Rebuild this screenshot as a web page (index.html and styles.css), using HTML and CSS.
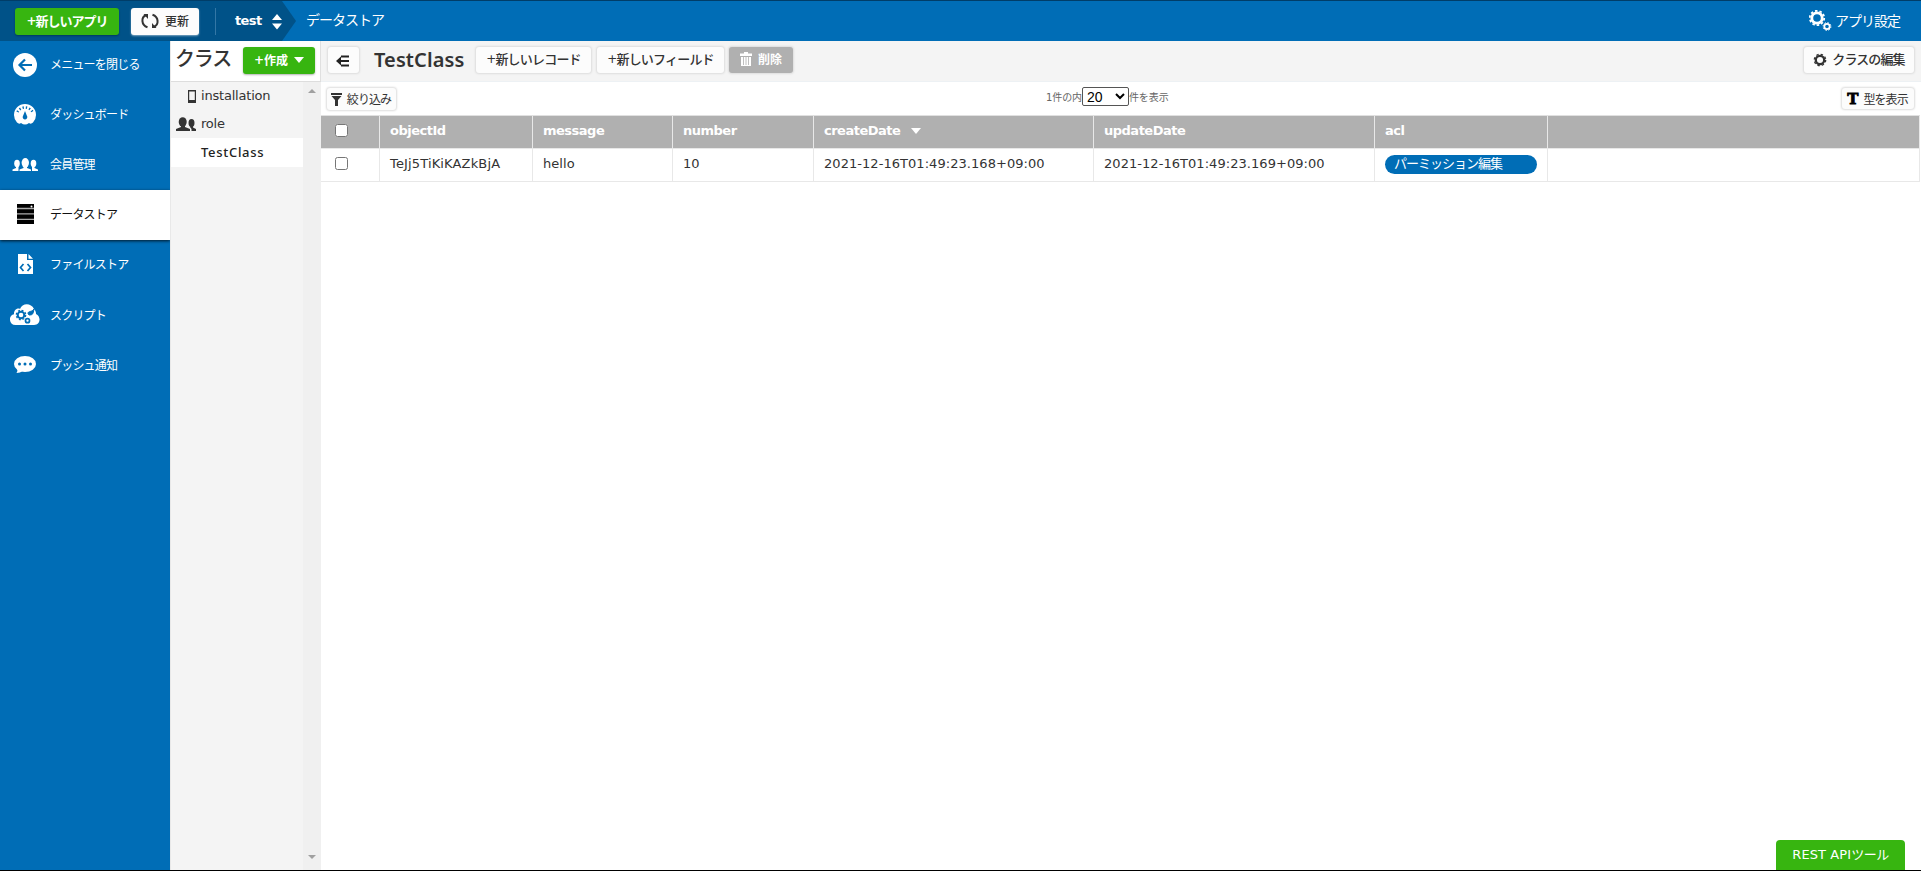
FILE: index.html
```html
<!DOCTYPE html>
<html lang="ja">
<head>
    <meta charset="UTF-8">
    <meta name="viewport" content="width=device-width, initial-scale=1.0">
    <title>データストア - test</title>
    <link rel="stylesheet" href="styles.css">
</head>
<body>
    <header class="topbar">
        <div class="app-area">
            <button class="btn btn-green new-app"><span class="plus">+</span>新しいアプリ</button>
            <button class="btn refresh">
                <svg width="18" height="16" viewBox="0 0 18 16" fill="none" stroke="#333" stroke-width="2"><path d="M6.500 14.200C0 12 0 4 5 2.300M11.500 1.800C18 4 18 12 13 13.700"/><path d="M2.500 1H7v5zM15.500 15H11v-5z" fill="#333" stroke="none"/></svg>
                更新
            </button>
            <span class="divider"></span>
            <span class="app-name">test</span>
            <svg class="updown" width="10" height="16" viewBox="0 0 10 16" fill="#fff"><path d="M5 0l5 6H0zM0 9.500h10L5 15.500z"/></svg>
        </div>
        <svg class="arrow" width="14" height="40" viewBox="0 0 14 40"><path d="M0 0l14 20L0 40z" fill="#005288"/></svg>
        <span class="crumb">データストア</span>
        <a class="settings">
            <svg width="23" height="22" viewBox="0 0 23 22" fill="none" stroke="#fff"><circle cx="8" cy="8" r="5.200" stroke-width="2.800"/><circle cx="8" cy="8" r="7.200" stroke-width="1.800" stroke-dasharray="2.500 2.025"/><circle cx="18" cy="16.500" r="2.700" stroke-width="1.800"/><circle cx="18" cy="16.500" r="3.900" stroke-width="1" stroke-dasharray="1.500 1.560"/></svg>
            <span>アプリ設定</span>
        </a>
    </header>

    <div class="wrapper">
        <nav class="sidebar">
            <a class="menu-item">
                <svg width="30" height="24" viewBox="0 0 30 24"><circle cx="15" cy="12" r="12" fill="#fff"/><path d="M22 12H10M15 6.500L9.500 12l5.500 5.500" fill="none" stroke="#006db6" stroke-width="2.200"/></svg>
                <span>メニューを閉じる</span>
            </a>
            <a class="menu-item">
                <svg width="30" height="22" viewBox="0 0 30 22"><path d="M7 19.500a11 11 0 1 1 16 0q-2 2-4 .5-4 3-8 0-2 1.500-4-.5z" fill="#fff"/><path d="M7.500 9a8.500 8.500 0 0 1 15 0" fill="none" stroke="#006db6" stroke-width="2.500" stroke-dasharray="1.300 2"/><path d="M15 8l2.200 5.500a2.300 2.300 0 1 1-4.400 0z" fill="#006db6"/></svg>
                <span>ダッシュボード</span>
            </a>
            <a class="menu-item users">
                <svg width="30" height="14" viewBox="0 0 30 14" fill="#fff"><ellipse cx="7" cy="5.500" rx="2.800" ry="3.700"/><ellipse cx="23.500" cy="5.500" rx="2.800" ry="3.700"/><path d="M2.500 13v-1.500L6 10V8h2.500v5zM28 13v-1.500L24.500 10V8H22v5z"/><ellipse cx="15.300" cy="4.800" rx="3.700" ry="4.800"/><path d="M13.500 8v2L9.500 11.500V13H21v-1.500L17 10V8z"/></svg>
                <span>会員管理</span>
            </a>
            <a class="menu-item active">
                <svg width="30" height="20" viewBox="0 0 30 20"><path d="M7 0h17v20H7z" fill="#000"/><path d="M7 4.500h17M7 9.900h17M7 15.300h17" stroke="#aaa" stroke-width="1.300"/><circle cx="21.500" cy="2.500" r="1" fill="#fff"/></svg>
                <span>データストア</span>
            </a>
            <a class="menu-item">
                <svg width="30" height="20" viewBox="0 0 30 20"><path d="M8 0h9v6h6v14H8zM18.500 0L23 4.700h-4.500z" fill="#fff"/><path d="M13.500 10L10.500 13.500l3 3.500M17.500 10l3 3.500-3 3.500" fill="none" stroke="#006db6" stroke-width="1.700"/></svg>
                <span>ファイルストア</span>
            </a>
            <a class="menu-item low">
                <svg width="30" height="22" viewBox="0 0 30 22"><path d="M5.500 21A5.500 5.500 0 0 1 4 10.200C3.500 6 8 3.500 10 5 12-1 21-1.500 24 5c2 2 2 4 2 5 5 2 5 11-2 11z" fill="#fff"/><g fill="none" stroke="#006db6"><circle cx="11" cy="11" r="3.300" stroke-width="2"/><circle cx="11" cy="11" r="4.700" stroke-width="1.300" stroke-dasharray="2 1.690"/><path d="M18 9.500c0-3 4-1 6-4.500-1 5-1 6-5 6z" fill="#006db6"/><circle cx="17.500" cy="16.700" r="2" stroke-width="1.700"/></g></svg>
                <span>スクリプト</span>
            </a>
            <a class="menu-item low">
                <svg width="30" height="18" viewBox="0 0 30 18"><ellipse cx="15" cy="8" rx="11" ry="8" fill="#fff"/><path d="M7 12q1 3-.5 5 4 0 6-2z" fill="#fff"/><g fill="#006db6"><circle cx="9.500" cy="8" r="1.500"/><circle cx="15" cy="8" r="1.500"/><circle cx="20.500" cy="8" r="1.500"/></g></svg>
                <span>プッシュ通知</span>
            </a>
        </nav>

        <aside class="classes">
            <div class="classes-head">
                <h2>クラス</h2>
                <button class="btn btn-green create"><span class="plus">+</span>作成<i class="caret"></i></button>
            </div>
            <div class="classes-body">
                <ul class="class-list">
                    <li><svg width="20" height="13" viewBox="0 0 20 13"><path d="M12 0h8v13h-8zM13.200 1.500V10h5.600V1.500z" fill="#333" fill-rule="evenodd"/></svg><span>installation</span></li>
                    <li><svg width="20" height="14" viewBox="0 0 20 14" fill="#333"><ellipse cx="6.700" cy="5" rx="4" ry="4.800"/><path d="M5 8v2l-5 2v2h14v-2l-5-2V8z"/><ellipse cx="15.500" cy="6" rx="3" ry="4"/><path d="M14.500 9l-.5 1 1.500 2v2H20v-2l-3-1.500V9z"/></svg><span>role</span></li>
                    <li class="selected"><span>TestClass</span></li>
                </ul>
                <div class="scrollbar"><i class="up"></i><i class="down"></i></div>
            </div>
        </aside>

        <main class="content">
            <div class="toolbar">
                <button class="btn collapse"><svg width="14" height="12" viewBox="0 0 14 12"><path d="M5 1.500h8M4 6h9M5 10.500h8" stroke="#222" stroke-width="2"/><path d="M0 6l5-4.500v9z" fill="#222"/></svg></button>
                <h1>TestClass</h1>
                <button class="btn new-record"><span class="plus">+</span>新しいレコード</button>
                <button class="btn new-field"><span class="plus">+</span>新しいフィールド</button>
                <button class="btn delete"><svg width="12" height="14" viewBox="0 0 12 14"><path d="M0 1.500h4V0h4v1.500h4V4H0zM1 5h10v9H1z" fill="#fff"/><path d="M3.500 5v8M6 5v8M8.500 5v8" stroke="#b0b0b0" stroke-width=".8"/></svg>削除</button>
                <button class="btn edit-class"><svg width="14" height="14" viewBox="0 0 14 14" fill="none" stroke="#333"><circle cx="7" cy="7" r="4.200" stroke-width="2.300"/><circle cx="7" cy="7" r="5.700" stroke-width="1.300" stroke-dasharray="2.400 2.077"/></svg>クラスの編集</button>
            </div>
            <div class="filterbar">
                <button class="btn small filter"><svg width="11" height="13" viewBox="0 0 11 13" fill="#333"><path d="M0 0h11v2H0zM.5 3h10L7 7v6H4V7z"/></svg>絞り込み</button>
                <div class="paging">
                    <span>1件の内</span>
                    <select><option>20</option></select>
                    <span>件を表示</span>
                </div>
                <button class="btn small types"><b>T</b>型を表示</button>
            </div>
            <div class="row head">
                <div><input type="checkbox"></div>
                <div>objectId</div>
                <div>message</div>
                <div>number</div>
                <div>createDate<i class="caret"></i></div>
                <div>updateDate</div>
                <div>acl</div>
                <div></div>
            </div>
            <div class="row">
                <div><input type="checkbox"></div>
                <div class="object-id">TeJj5TiKiKAZkBjA</div>
                <div>hello</div>
                <div>10</div>
                <div>2021-12-16T01:49:23.168+09:00</div>
                <div>2021-12-16T01:49:23.169+09:00</div>
                <div><span class="acl">パーミッション編集</span></div>
                <div></div>
            </div>
        </main>
    </div>
    <a class="rest-api">REST API<span>ツール</span></a>
</body>
</html>
```
FILE: styles.css
```css
* {
    box-sizing: border-box;
}
body {
    margin: 0;
    height: 871px;
    display: flex;
    flex-direction: column;
    overflow: hidden;
    font-family: "DejaVu Sans", "Noto Sans CJK JP", sans-serif;
    font-size: 13px;
    color: #333;
    border-top: 1px solid #003d68;
    border-bottom: 1px solid #000;
}
svg {
    flex: none;
}
.topbar {
    display: flex;
    height: 40px;
    flex: none;
    background: #006db6;
    color: #fff;
}
.app-area {
    display: flex;
    width: 282px;
    padding: 7px 0 0 15px;
    background: #005288;
}
.btn {
    display: flex;
    align-items: center;
    justify-content: center;
    flex: none;
    height: 26px;
    padding: 0 0 2px;
    border: 0;
    border-radius: 3px;
    background: #fcfcfc;
    box-shadow: 0 0 2px 1px #ddd;
    color: #333;
    font-family: "Noto Sans CJK JP", sans-serif;
    font-size: 13px;
    font-weight: 500;
    line-height: 20px;
    white-space: nowrap;
}
.btn-green {
    height: 27px;
    background: #37b510;
    box-shadow: 0 1px 2px rgba(0, 0, 0, 0.3);
    color: #fff;
    font-weight: bold;
}
.plus {
    font-family: "DejaVu Sans", sans-serif;
    font-size: 12px;
}
.new-app {
    width: 104px;
    letter-spacing: -1px;
}
.refresh {
    width: 68px;
    height: 27px;
    margin-left: 12px;
    gap: 6px;
    font-size: 12px;
    box-shadow: 0 1px 2px rgba(255, 255, 255, 0.5);
}
.divider {
    width: 1px;
    height: 27px;
    margin-left: 16px;
    background: #3377a6;
}
.app-name {
    width: 38px;
    margin-left: 19px;
    padding-top: 5px;
    font-size: 13px;
    font-weight: bold;
    letter-spacing: -0.6px;
}
.updown {
    margin-top: 6px;
}
.crumb {
    margin-left: 10px;
    font-size: 14px;
    line-height: 38px;
    letter-spacing: -1px;
}
.settings {
    display: flex;
    align-items: center;
    margin-left: auto;
    margin-right: 21px;
    gap: 3px;
    font-size: 14px;
    letter-spacing: -1px;
}
.settings span {
    padding-bottom: 2px;
}
.wrapper {
    display: flex;
    flex: 1;
    min-height: 0;
}
.sidebar {
    width: 170px;
    flex: none;
    background: #006db6;
}
.menu-item {
    display: flex;
    align-items: center;
    height: 50px;
    padding: 0 0 2px 10px;
    gap: 10px;
    color: #fff;
    font-size: 12px;
    letter-spacing: -0.8px;
}
.menu-item:first-child {
    height: 49px;
}
.menu-item.users svg {
    margin-top: 2px;
}
.menu-item.low {
    padding-bottom: 0;
}
.menu-item.active {
    background: #fff;
    color: #111;
    box-shadow: 0 1px 3px rgba(0, 0, 0, 0.8);
}
.menu-item span {
    padding-bottom: 2px;
}
.classes {
    display: flex;
    flex-direction: column;
    width: 151px;
    flex: none;
    border-left: 1px solid #e8e8e8;
}
.classes-head {
    display: flex;
    height: 40px;
    flex: none;
    padding: 6px 0 0 4px;
    border-right: 1px solid #e0e0e0;
}
.classes-head h2 {
    width: 68px;
    margin: -5px 0 0;
    font-size: 20px;
    font-weight: 500;
    line-height: 34px;
    letter-spacing: -1.2px;
}
.create {
    width: 72px;
    font-size: 12px;
}
.caret {
    border: 5px solid transparent;
    border-top: 6px solid #fff;
    border-bottom: 0;
    margin-left: 6px;
}
.classes-body {
    display: flex;
    flex: 1;
    border-top: 1px solid #ddd;
    background: #f4f4f4;
}
.class-list {
    flex: 1;
    margin: 0;
    padding: 0;
    list-style: none;
}
.class-list li {
    display: flex;
    align-items: center;
    height: 28px;
    padding-left: 5px;
    gap: 5px;
}
.class-list span {
    padding-bottom: 2px;
    letter-spacing: -0.2px;
}
.class-list .selected {
    height: 29px;
    padding-left: 30px;
    background: #fff;
    color: #222;
}
.selected span {
    font-family: "Noto Sans", sans-serif;
    font-weight: 500;
    letter-spacing: 0.7px;
}
.scrollbar {
    display: flex;
    flex-direction: column;
    justify-content: space-between;
    align-items: center;
    width: 18px;
    padding: 7px 0 11px;
    background: #f0f0f0;
}
.scrollbar i {
    border: 4px solid transparent;
}
.scrollbar .up {
    border-top: 0;
    border-bottom-color: #a0a0a0;
}
.scrollbar .down {
    border-bottom: 0;
    border-top-color: #a0a0a0;
}
.content {
    flex: 1;
    min-width: 0;
    background: #fff;
}
.toolbar {
    display: flex;
    height: 41px;
    padding: 6px 7px 0;
    background: #f4f4f4;
    border-bottom: 1px solid #edf1f4;
}
.collapse {
    width: 31px;
    padding: 1px 2px 0 0;
}
.toolbar h1 {
    width: 102px;
    margin: 0 0 0 15px;
    font-family: "Noto Sans", sans-serif;
    font-size: 20px;
    font-weight: 600;
    line-height: 25px;
    letter-spacing: 0.1px;
}
.new-record {
    width: 115px;
    letter-spacing: -0.8px;
}
.new-field {
    width: 127px;
    margin-left: 6px;
    letter-spacing: -0.8px;
}
.delete {
    width: 64px;
    margin-left: 5px;
    gap: 6px;
    background: #b0b0b0;
    color: #fff;
    font-size: 12px;
    font-weight: bold;
}
.edit-class {
    width: 110px;
    margin-left: auto;
    gap: 5px;
    letter-spacing: -0.9px;
}
.edit-class svg {
    margin-top: 2px;
}
.filterbar {
    display: flex;
    align-items: flex-start;
    height: 33px;
    padding: 6px 7px 0 6px;
}
.small {
    height: 22px;
    padding: 0 1px 0 0;
    font-size: 12px;
    font-weight: normal;
    letter-spacing: -0.9px;
}
.filter {
    width: 69px;
    gap: 5px;
}
.types {
    width: 72px;
    height: 21px;
    margin-left: auto;
    gap: 6px;
}
.types b {
    font-family: "DejaVu Serif", serif;
    font-size: 15px;
    font-weight: 900;
    color: #000;
    -webkit-text-stroke: 0.8px #000;
}
.paging {
    display: flex;
    align-items: center;
    height: 20px;
    margin: -2px 0 0 650px;
    font-size: 10px;
    letter-spacing: -0.1px;
    color: #666;
}
.paging select {
    width: 47px;
    height: 19px;
    padding: 0;
    border: 1px solid #555;
    border-radius: 2px;
    background: #fff;
    font: 14px "Liberation Sans", sans-serif;
    color: #000;
}
.row {
    display: grid;
    grid-template-columns: 59px 153px 140px 141px 280px 281px 173px 1fr;
    height: 33px;
    margin-right: 1px;
    border-bottom: 1px solid #e8e8e8;
}
.row > div {
    display: flex;
    align-items: center;
    padding: 0 10px 3px;
    border-right: 1px solid #e8e8e8;
    white-space: nowrap;
    letter-spacing: 0.05px;
}
.row .object-id {
    letter-spacing: 0.15px;
}
.head {
    height: 34px;
    border-top: 1px solid #e0e0e0;
    background: #b0b0b0;
    color: #fff;
    font-weight: bold;
}
.row.head > div {
    letter-spacing: -0.5px;
}
.head .caret {
    margin-left: 11px;
}
.row input {
    width: 13px;
    height: 13px;
    margin: 0 0 0 4px;
}
.acl {
    width: 152px;
    height: 19px;
    margin-top: 2px;
    padding-left: 9px;
    border-radius: 10px;
    background: #006db6;
    color: #fff;
    line-height: 17px;
    letter-spacing: -1px;
}
.rest-api {
    position: fixed;
    right: 16px;
    bottom: 1px;
    width: 129px;
    height: 30px;
    border-radius: 4px 4px 0 0;
    background: #37b510;
    color: #fff;
    line-height: 30px;
    text-align: center;
    letter-spacing: 0.1px;
}
.rest-api span {
    letter-spacing: -0.5px;
}
```
